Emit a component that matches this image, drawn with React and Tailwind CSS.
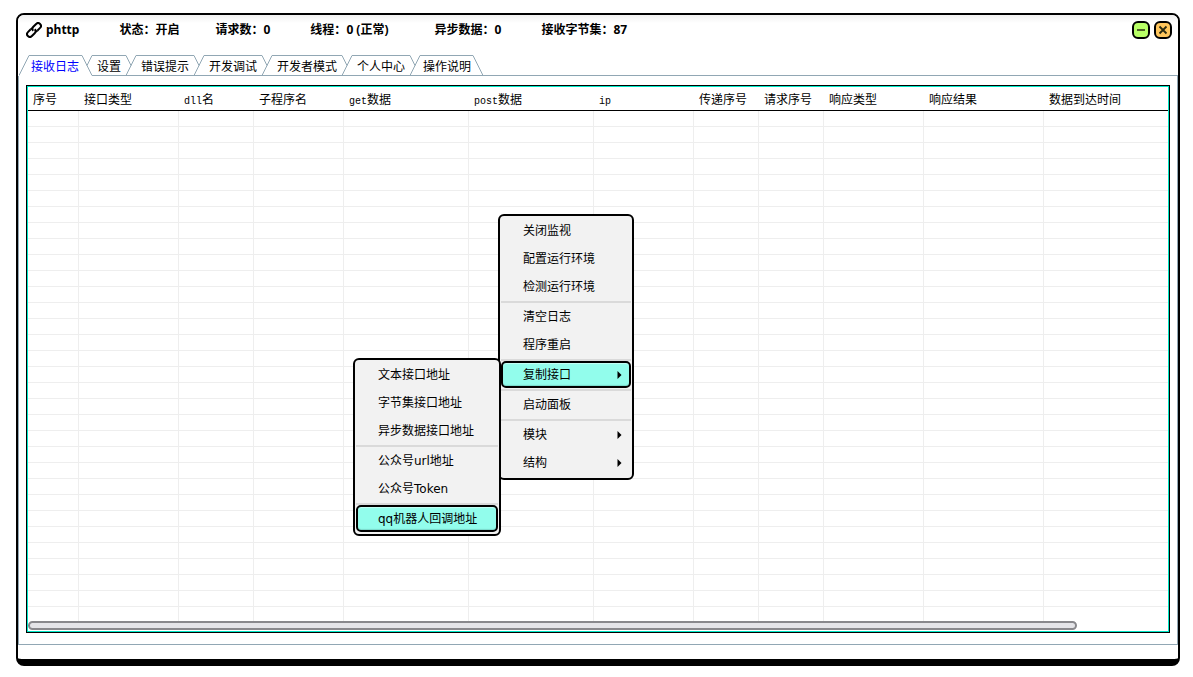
import React, { useState } from 'react';

const stats = [
  { label: '状态', value: '开启', gap: 'mr-9' },
  { label: '请求数', value: '0', gap: 'mr-10' },
  { label: '线程', value: '0 (正常)', gap: 'mr-[46px]' },
  { label: '异步数据', value: '0', gap: 'mr-10' },
  { label: '接收字节集', value: '87', gap: '' },
];

const tabs = ['接收日志', '设置', '错误提示', '开发调试', '开发者模式', '个人中心', '操作说明'];

const columns = [
  { latin: '', text: '序号', width: 'w-[51px]' },
  { latin: '', text: '接口类型', width: 'w-[100px]' },
  { latin: 'dll', text: '名', width: 'w-[75px]' },
  { latin: '', text: '子程序名', width: 'w-[90px]' },
  { latin: 'get', text: '数据', width: 'w-[125px]' },
  { latin: 'post', text: '数据', width: 'w-[125px]' },
  { latin: 'ip', text: '', width: 'w-[100px]' },
  { latin: '', text: '传递序号', width: 'w-[65px]' },
  { latin: '', text: '请求序号', width: 'w-[65px]' },
  { latin: '', text: '响应类型', width: 'w-[100px]' },
  { latin: '', text: '响应结果', width: 'w-[120px]' },
  { latin: '', text: '数据到达时间', width: 'w-auto' },
];

const ROW_COUNT = 31;

// null = separator
const mainMenu = [
  { text: '关闭监视' },
  { text: '配置运行环境' },
  { text: '检测运行环境' },
  null,
  { text: '清空日志' },
  { text: '程序重启' },
  null,
  { text: '复制接口', arrow: true, active: true },
  null,
  { text: '启动面板' },
  null,
  { text: '模块', arrow: true },
  { text: '结构', arrow: true },
];

const copyMenu = [
  { text: '文本接口地址' },
  { text: '字节集接口地址' },
  { text: '异步数据接口地址' },
  null,
  { text: '公众号url地址' },
  { text: '公众号Token' },
  null,
  { text: 'qq机器人回调地址', active: true },
];

function ChainIcon() {
  return (
    <svg width="16" height="16" viewBox="0 0 16 16" fill="none" stroke="#000" strokeWidth="2">
      <g transform="rotate(-45 8 8)">
        <path d="M6.2 5.2H2.2A2.8 2.8 0 0 0 2.2 10.8H6.2A2.8 2.8 0 0 0 9 8" />
        <path d="M9.8 10.8H13.8A2.8 2.8 0 0 0 13.8 5.2H9.8A2.8 2.8 0 0 0 7 8" />
        <path d="M6.2 5.2A2.8 2.8 0 0 1 8.4 6.3M9.8 10.8A2.8 2.8 0 0 1 7.6 9.7" />
      </g>
    </svg>
  );
}

function TitleBar() {
  return (
    <header className="flex h-10 items-start justify-between bg-linear-to-b from-[#f0f0f0] from-0% to-white to-20% pl-2 pr-1.5">
      <div className="flex h-[30px] items-center whitespace-nowrap font-['Noto_Sans','Noto_Sans_CJK_SC',sans-serif] font-bold">
        <ChainIcon />
        <h1 className="ml-1 mr-10">phttp</h1>
        {stats.map((s) => (
          <p key={s.label} className={s.gap}>
            {s.label}：{s.value}
          </p>
        ))}
      </div>
      <div className="flex h-[30px] items-center gap-1">
        <button aria-label="最小化" className="flex size-[18px] items-center justify-center rounded-md border-2 border-black bg-[#b8ff66]">
          <svg width="14" height="14" viewBox="0 0 14 14" stroke="#2a2a10" strokeWidth="1.6">
            <path d="M3 7h8" />
          </svg>
        </button>
        <button aria-label="关闭" className="flex size-[18px] items-center justify-center rounded-md border-2 border-black bg-[#ffc65c]">
          <svg width="14" height="14" viewBox="0 0 14 14" stroke="#2a2a10" strokeWidth="1.8">
            <path d="M3.5 3.5l7 7M10.5 3.5l-7 7" />
          </svg>
        </button>
      </div>
    </header>
  );
}

function Tab({ label, index, current, onSelect }) {
  const selected = index === current;
  const last = index === tabs.length - 1;
  const leftPath = index > 0 && index - 1 === current ? 'M5 10.5L10 0.5' : 'M0 20.5L10 0.5';
  const rightPath = selected || last ? 'M0 0.5L10 20.5' : 'M0 0.5L5 10.5';

  let padding = 'px-[5px]';
  if (index === 0) padding = 'pl-0.5 pr-[3px]';
  if (last) padding = 'pl-[3px] pr-0.5';

  return (
    <button
      role="tab"
      aria-selected={selected}
      onClick={() => onSelect(index)}
      className={`flex h-[21px] ${index > 0 ? '-ml-2.5' : ''} ${selected ? 'text-[#0000ff]' : 'text-black'}`}
    >
      <svg width="10" height="21" fill="none" stroke="#91a7b4">
        <path d={leftPath} />
      </svg>
      <span
        className={`flex h-[21px] items-center border-t border-[#91a7b4] pt-0.5 ${padding} ${selected ? '' : 'border-b'}`}
      >
        {label}
      </span>
      <svg width="10" height="21" fill="none" stroke="#91a7b4">
        <path d={rightPath} />
        {!selected && <path d="M0 20.5H10" />}
      </svg>
    </button>
  );
}

function LogTable() {
  return (
    <div className="border border-black">
      <div className="border border-[#00e8c8] bg-white">
        <table className="w-full table-fixed border-separate border-spacing-0">
          <thead>
            <tr>
              {columns.map((c) => (
                <th
                  key={c.latin + c.text}
                  className={`h-6 whitespace-nowrap border-b border-black px-[5px] pb-0 pt-0.5 text-left font-normal ${c.width}`}
                >
                  {c.latin && <span className="font-['Liberation_Mono',monospace] text-[10px] leading-none">{c.latin}</span>}
                  {c.text}
                </th>
              ))}
            </tr>
          </thead>
          <tbody>
            {Array.from({ length: ROW_COUNT }, (_, row) => (
              <tr key={row}>
                {columns.map((c, i) => (
                  <td
                    key={i}
                    className={`h-4 border-b border-[#eeeeee] p-0 ${i < columns.length - 1 ? 'border-r' : ''}`}
                  />
                ))}
              </tr>
            ))}
            <tr>
              {columns.map((c, i) => (
                <td key={i} className={`h-3.5 border-[#eeeeee] p-0 ${i < columns.length - 1 ? 'border-r' : ''}`} />
              ))}
            </tr>
          </tbody>
        </table>
        <div className="pb-px">
          <div className="h-[9px] w-[92%] rounded-full border-2 border-[#88888c] bg-[#e4e4e8]" />
        </div>
      </div>
    </div>
  );
}

function Menu({ items, label, className }) {
  return (
    <div
      role="menu"
      aria-label={label}
      className={`absolute rounded-md border-2 border-black bg-[#f2f2f2] p-px ${className}`}
    >
      {items.map((item, i) => {
        if (!item) return <hr key={i} className="h-0.5 border-0 bg-[#dadada]" />;
        return (
          <button
            key={i}
            role="menuitem"
            className={`flex w-full items-center justify-between whitespace-nowrap ${
              item.active
                ? 'mb-px h-[27px] rounded-[5px] border-2 border-black bg-[#92fdec] pl-5 pr-[7px] shadow-[inset_0_1px_1px_#c8fff6,inset_0_-1px_1px_#7ad8ca]'
                : 'h-7 pl-[22px] pr-[9px]'
            }`}
          >
            {item.text}
            {item.arrow && (
              <svg width="5" height="8" viewBox="0 0 5 8">
                <path d="M0.5 0L4.5 4L0.5 8z" fill="#000" />
              </svg>
            )}
          </button>
        );
      })}
    </div>
  );
}

export default function App() {
  const [current, setCurrent] = useState(0);

  return (
    <div
      lang="zh-CN"
      className="relative bg-white pb-[11px] pl-4 pr-[13px] pt-[13px] font-['DejaVu_Sans','Noto_Sans_CJK_SC',sans-serif] text-[12px] leading-4 text-black"
    >
      <div className="overflow-hidden rounded-lg border-2 border-b-[7px] border-black bg-white">
        <TitleBar />
        <div role="tablist" className="flex whitespace-nowrap pl-px">
          {tabs.map((t, i) => (
            <Tab key={t} label={t} index={i} current={current} onSelect={setCurrent} />
          ))}
          <div className="flex-1 border-b border-[#91a7b4]" />
        </div>
        <main className="mb-3.5 border-x border-b border-[#91a7b4] px-[7px] pb-[11px] pt-[9px]">
          <LogTable />
        </main>
      </div>

      <Menu items={mainMenu} label="日志菜单" className="left-[498px] top-[214px] w-[136px]" />
      <Menu items={copyMenu} label="复制接口" className="left-[353px] top-[358px] w-[148px]" />
    </div>
  );
}
